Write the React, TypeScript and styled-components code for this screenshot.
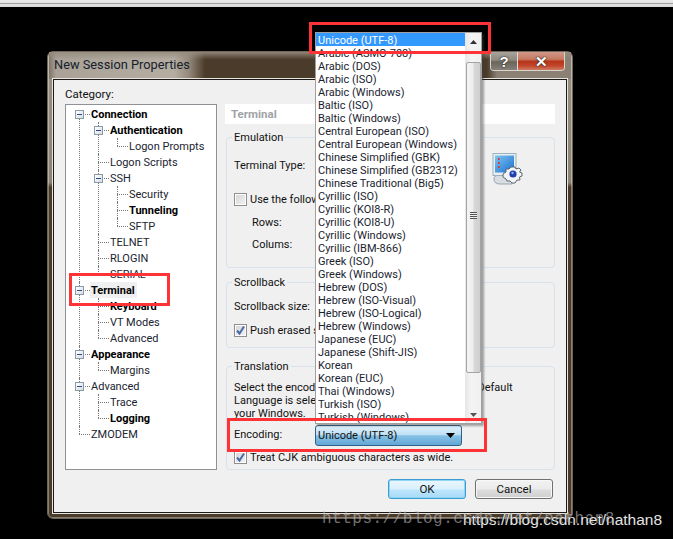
import React from "react";
import styled, { createGlobalStyle } from "styled-components";

const Global = createGlobalStyle`
  html, body { margin: 0; padding: 0; background: #000; overflow: hidden; }
  * { box-sizing: border-box; }
`;

const FONT = `Roboto, "Noto Sans", sans-serif`;

const Page = styled.div`
  position: relative;
  width: 673px;
  height: 539px;
  background: #000;
  overflow: hidden;
  font: 11px/16px ${FONT};
  color: #111;
`;

const TopStrip = styled.div`
  height: 7px;
  background: linear-gradient(180deg, #e8e8e8 0, #e8e8e8 35%, #9c9c9c 45%, #a8a8a8 55%, #e4e4e4 65%, #d8d8d8 100%);
`;

const Win = styled.div`
  width: 526px;
  height: 468px;
  margin: 44px 0 0 47px;
  padding: 0 5px 5px 5px;
  border-radius: 6px;
  border: 1px solid #6f6558;
  background: linear-gradient(180deg, #9b9286 0, #8c8377 28%, #4a3a2a 29%, #4a3a2a 100%);
  display: flex;
  flex-direction: column;
  box-shadow: inset 0 0 0 1px rgba(255, 255, 255, 0.35);
`;

const TitleBar = styled.div`
  height: 27px;
  margin: 0 -4px 0 -4px;
  padding-left: 5px;
  flex: none;
  display: flex;
  align-items: flex-start;
  justify-content: space-between;
  background:
    linear-gradient(180deg, rgba(150, 140, 128, 0.9) 0, rgba(150, 140, 128, 0) 28%),
    linear-gradient(90deg, #7d7467 0, #aaa297 7px, #b5ada2 125px, #94897b 140px, #4b3b2a 156px, #4b3b2a 438px, #8a8073 448px, #8a8073 100%);
`;

const TitleText = styled.span`
  font-size: 12.8px;
  line-height: 26px;
  color: #14202c;
`;

const Caption = styled.div`
  display: flex;
  height: 19px;
  margin-right: 6px;
  border: 1px solid #d8d4cc;
  border-top: 0;
  border-radius: 0 0 4px 4px;
  overflow: hidden;
`;

const CapBtn = styled.div<{ $wide?: boolean }>`
  width: ${(p) => (p.$wide ? 46 : 27)}px;
  display: flex;
  align-items: center;
  justify-content: center;
  font: bold 15px/17px "Liberation Sans", sans-serif;
  color: #fff;
  text-shadow: 0 0 2px #222, 0 0 1px #222;
  border-right: ${(p) => (p.$wide ? 0 : "1px solid #ddd")};
  background: ${(p) =>
    p.$wide
      ? "linear-gradient(180deg,#cf9a88 0,#c77a62 40%,#b8351a 52%,#c0452a 75%,#d07a60 100%)"
      : "linear-gradient(180deg,#a8a39b 0,#8f8a80 45%,#6a645a 55%,#85807a 100%)"};
`;

const Client = styled.div`
  flex: 1;
  background: #f0f0f0;
  border: 1px solid #1c1a18;
  outline: 1px solid #e8e4dc;
  padding: 5px 11px 0 11px;
  display: flex;
  flex-direction: column;
`;

const CategoryLabel = styled.div`
  height: 19px;
  font-size: 11.5px;
  line-height: 18px;
`;

const Columns = styled.div`
  display: grid;
  grid-template-columns: 152px 330px;
  column-gap: 8px;
  height: 366px;
`;

const TreeBox = styled.div`
  background: #fff;
  border: 1px solid #8e9296;
  padding-top: 1px;
`;

const Ul = styled.ul<{ $root?: boolean }>`
  list-style: none;
  margin: 0 0 0 ${(p) => (p.$root ? 13 : 19)}px;
  padding: 0;
`;

const Li = styled.li<{ $root?: boolean }>`
  position: relative;
  &::before {
    content: "";
    position: absolute;
    left: 0;
    top: 0;
    bottom: 0;
    border-left: 1px dotted #777;
  }
  &:first-child::before {
    top: ${(p) => (p.$root ? 8 : 0)}px;
  }
  &:last-child::before {
    bottom: auto;
    height: 8px;
  }
`;

const Row = styled.div`
  position: relative;
  height: 16px;
  padding-left: 11px;
  display: flex;
  align-items: center;
  &::before {
    content: "";
    position: absolute;
    left: 0;
    top: 8px;
    width: 11px;
    border-top: 1px dotted #777;
  }
`;

const Label = styled.span<{ $bold?: boolean; $selected?: boolean }>`
  position: relative;
  padding: 0 2px 0 1px;
  height: 16px;
  line-height: 17px;
  font-size: 11px;
  font-weight: ${(p) => (p.$bold ? 700 : 400)};
  color: ${(p) => (p.$bold ? "#000" : "#1a2430")};
  background: ${(p) => (p.$selected ? "#f0f0f0" : "#fff")};
`;

const Expander = styled.span`
  position: absolute;
  left: -4px;
  top: 4px;
  width: 9px;
  height: 9px;
  border: 1px solid #8a9aa8;
  background: linear-gradient(135deg, #fff, #d8dde2);
  display: flex;
  align-items: center;
  justify-content: center;
  z-index: 1;
  &::after {
    content: "";
    width: 5px;
    height: 1px;
    background: #2a4a8a;
  }
`;

type Node = { t: string; b?: boolean; s?: boolean; open?: boolean; c?: Node[] };

const TREE: Node[] = [
  {
    t: "Connection", b: true, open: true,
    c: [
      { t: "Authentication", b: true, open: true, c: [{ t: "Logon Prompts" }] },
      { t: "Logon Scripts" },
      { t: "SSH", open: true, c: [{ t: "Security" }, { t: "Tunneling", b: true }, { t: "SFTP" }] },
      { t: "TELNET" },
      { t: "RLOGIN" },
      { t: "SERIAL" },
    ],
  },
  {
    t: "Terminal", b: true, s: true, open: true,
    c: [{ t: "Keyboard", b: true }, { t: "VT Modes" }, { t: "Advanced" }],
  },
  { t: "Appearance", b: true, open: true, c: [{ t: "Margins" }] },
  { t: "Advanced", open: true, c: [{ t: "Trace" }, { t: "Logging", b: true }] },
  { t: "ZMODEM" },
];

function TreeList({ nodes, root }: { nodes: Node[]; root?: boolean }) {
  return (
    <Ul $root={root}>
      {nodes.map((n) => (
        <Li key={n.t} $root={root}>
          <Row>
            {n.open && <Expander />}
            <Label $bold={n.b} $selected={n.s}>{n.t}</Label>
          </Row>
          {n.c && <TreeList nodes={n.c} />}
        </Li>
      ))}
    </Ul>
  );
}

const RightCol = styled.div`
  display: flex;
  flex-direction: column;
`;

const PanelHead = styled.div`
  height: 20px;
  background: #fff;
  padding-left: 6px;
  font-weight: 700;
  font-size: 11.5px;
  line-height: 20px;
  color: #9fa3a6;
  margin-bottom: 13px;
`;

const Group = styled.fieldset<{ $h: number; $mt?: number }>`
  position: relative;
  margin: ${(p) => p.$mt ?? 0}px 0 0 1px;
  width: 329px;
  height: ${(p) => p.$h}px;
  padding: 0 7px;
  border: 1px solid #d9e2ea;
  border-radius: 4px;
  min-width: 0;
`;

const Legend = styled.div`
  position: absolute;
  left: 5px;
  top: -8px;
  padding: 0 2px;
  background: #f0f0f0;
  line-height: 15px;
`;

const Line = styled.div<{ $mt?: number; $indent?: number }>`
  display: flex;
  align-items: flex-start;
  height: 16px;
  line-height: 18px;
  white-space: nowrap;
  margin-top: ${(p) => p.$mt ?? 0}px;
  padding-left: ${(p) => p.$indent ?? 0}px;
`;

const Para = styled.div`
  margin-top: 14px;
  line-height: 13px;
  white-space: nowrap;
`;

const Box = styled.span`
  width: 13px;
  height: 13px;
  margin-right: 3px;
  flex: none;
  align-self: center;
  border: 1px solid #8e8f8f;
  background: linear-gradient(135deg, #d4d4d4, #f4f4f4);
  box-shadow: inset 0 0 0 1px #fff;
  display: flex;
  align-items: center;
  justify-content: center;
`;

function Check({ on }: { on?: boolean }) {
  return (
    <Box>
      {on && (
        <svg width="11" height="11" viewBox="0 0 11 11">
          <path d="M2 5.5 L4.5 8.5 L9 1.5" fill="none" stroke="#4a6aa5" strokeWidth="2" />
        </svg>
      )}
    </Box>
  );
}

const EncLabel = styled.span`
  width: 81px;
  line-height: 16px;
`;

const Combo = styled.div`
  width: 147px;
  height: 21px;
  padding: 1px 6px 0 2px;
  flex: none;
  align-self: center;
  line-height: 16px;
  border: 1px solid #2c628b;
  border-radius: 3px;
  display: flex;
  align-items: center;
  justify-content: space-between;
  background: linear-gradient(180deg, #dff0fb 0, #bfe0f5 45%, #86c1e6 52%, #63a8d5 100%);
`;

const IconSlot = styled.div`
  margin-left: auto;
  margin-right: 21px;
  height: 16px;
`;

const Footer = styled.div`
  display: flex;
  justify-content: flex-end;
  gap: 9px;
  margin-top: 9px;
  padding-right: 2px;
`;

const Btn = styled.div<{ $primary?: boolean }>`
  width: 78px;
  height: 20px;
  border-radius: 3px;
  display: flex;
  align-items: center;
  justify-content: center;
  font-size: 11.5px;
  border: 1px solid ${(p) => (p.$primary ? "#3c9bd0" : "#707070")};
  background: ${(p) =>
    p.$primary
      ? "linear-gradient(180deg,#eaf6fd 0,#d9f0fc 50%,#bee6fd 55%,#a7d9f5 100%)"
      : "linear-gradient(180deg,#f2f2f2 0,#ebebeb 50%,#dddddd 55%,#cfcfcf 100%)"};
  box-shadow: inset 0 0 0 1px ${(p) => (p.$primary ? "#8fd6f5" : "#f8f8f8")};
`;

const Drop = styled.div`
  position: absolute;
  left: 315px;
  top: 32px;
  width: 167px;
  height: 392px;
  background: #fff;
  border: 1px solid #a0a0a0;
  box-shadow: 2px 2px 2px rgba(60, 60, 60, 0.45);
  display: flex;
`;

const DropList = styled.div`
  flex: 1;
  overflow: hidden;
`;

const DropItem = styled.div<{ $sel?: boolean }>`
  height: 13px;
  line-height: 15px;
  padding-left: 2px;
  white-space: nowrap;
  background: ${(p) => (p.$sel ? "#3399ff" : "transparent")};
  color: ${(p) => (p.$sel ? "#fff" : "#1a2430")};
`;

const Scroll = styled.div`
  width: 16px;
  flex: none;
  background: linear-gradient(90deg, #e6e6e6 0, #f4f4f4 40%, #f0f0f0 100%);
  display: flex;
  flex-direction: column;
  align-items: center;
`;

const ScrollEnd = styled.div`
  flex: none;
  height: 17px;
  width: 100%;
  display: flex;
  align-items: center;
  justify-content: center;
`;

const Thumb = styled.div`
  width: 15px;
  height: 311px;
  margin-top: 12px;
  border: 1px solid #a4a4a4;
  border-radius: 2px;
  background: linear-gradient(90deg, #f4f4f4 0, #eeeeee 45%, #d8d8d8 55%, #cfcfcf 100%);
  display: flex;
  align-items: center;
  justify-content: center;
`;

const Grip = styled.div`
  width: 7px;
  height: 7px;
  margin-top: -4px;
  background: repeating-linear-gradient(180deg, #555 0, #555 1px, #eee 1px, #eee 2px);
`;

const ScrollGap = styled.div`
  flex: 1;
`;

const RedBox = styled.div<{ $x: number; $y: number; $w: number; $h: number }>`
  position: absolute;
  left: ${(p) => p.$x}px;
  top: ${(p) => p.$y}px;
  width: ${(p) => p.$w}px;
  height: ${(p) => p.$h}px;
  border: 3px solid #ff3236;
`;

const MarkMono = styled.div`
  position: absolute;
  left: 322px;
  top: 509px;
  font: 16px/20px "Liberation Mono", monospace;
  letter-spacing: 0.5px;
  color: rgba(190, 190, 190, 0.6);
  white-space: nowrap;
`;

const MarkSans = styled.div`
  position: absolute;
  left: 463px;
  top: 510px;
  font: 15.500px/20px "Liberation Sans", sans-serif;
  color: #e4e4e4;
  white-space: nowrap;
  text-shadow: 0 0 1px #000;
`;

const ITEMS = [
  "Unicode (UTF-8)", "Arabic (ASMO-708)", "Arabic (DOS)", "Arabic (ISO)", "Arabic (Windows)",
  "Baltic (ISO)", "Baltic (Windows)", "Central European (ISO)", "Central European (Windows)",
  "Chinese Simplified (GBK)", "Chinese Simplified (GB2312)", "Chinese Traditional (Big5)",
  "Cyrillic (ISO)", "Cyrillic (KOI8-R)", "Cyrillic (KOI8-U)", "Cyrillic (Windows)", "Cyrillic (IBM-866)",
  "Greek (ISO)", "Greek (Windows)", "Hebrew (DOS)", "Hebrew (ISO-Visual)", "Hebrew (ISO-Logical)",
  "Hebrew (Windows)", "Japanese (EUC)", "Japanese (Shift-JIS)", "Korean", "Korean (EUC)",
  "Thai (Windows)", "Turkish (ISO)", "Turkish (Windows)",
];

function SessionIcon() {
  return (
    <svg width="34" height="34" viewBox="0 0 34 34" style={{ marginTop: -4, display: "block" }}>
      <defs>
        <linearGradient id="scr" x1="0" y1="0" x2="1" y2="1">
          <stop offset="0" stopColor="#7cc4f0" />
          <stop offset="1" stopColor="#1e6fd0" />
        </linearGradient>
      </defs>
      <path d="M2 26 Q2 22 8 22 L20 22 L20 31 L8 31 Q2 31 2 26Z" fill="#d8dde2" stroke="#9aa5ae" />
      <rect x="1" y="0.500" width="23" height="22" fill="#e8eef2" stroke="#9eb0be" />
      <rect x="3" y="2.500" width="19" height="17" fill="url(#scr)" />
      <rect x="6" y="5" width="1.600" height="2" fill="#e03030" />
      <rect x="6" y="9" width="1.600" height="2" fill="#e03030" />
      <rect x="6" y="13" width="1.600" height="2" fill="#e03030" />
      <g transform="translate(-3 -3)">
        <path
          d="M22 17 L26 17 L27 19 L30 18 L32 20 L30.500 22 L33 23 L33 26 L30.500 27 L31 30 L28 30 L26 33 L23 33 L21 31 L18 31 L17 29 L14 27 L14 24 L17 22 L17 19 L20 19Z"
          fill="#f2f4f6"
          stroke="#5a6670"
          strokeWidth="1"
        />
        <circle cx="24" cy="24" r="3.600" fill="#1f3fae" />
        <circle cx="23.500" cy="23" r="1.200" fill="#8fb0ee" />
      </g>
    </svg>
  );
}

export default function App() {
  return (
    <>
      <Global />
      <Page>
        <TopStrip />
        <Win>
          <TitleBar>
            <TitleText>New Session Properties</TitleText>
            <Caption>
              <CapBtn>?</CapBtn>
              <CapBtn $wide>✕</CapBtn>
            </Caption>
          </TitleBar>
          <Client>
            <CategoryLabel>Category:</CategoryLabel>
            <Columns>
              <TreeBox>
                <TreeList nodes={TREE} root />
              </TreeBox>
              <RightCol>
                <PanelHead>Terminal</PanelHead>
                <Group $h={131}>
                  <Legend>Emulation</Legend>
                  <Line $mt={19}>
                    Terminal Type:
                    <IconSlot><SessionIcon /></IconSlot>
                  </Line>
                  <Line $mt={18}>
                    <Check />
                    Use the following
                  </Line>
                  <Line $mt={7} $indent={18}>Rows:</Line>
                  <Line $mt={6} $indent={18}>Colums:</Line>
                </Group>
                <Group $h={66} $mt={14}>
                  <Legend>Scrollback</Legend>
                  <Line $mt={15}>Scrollback size:</Line>
                  <Line $mt={8}>
                    <Check on />
                    Push erased screens
                  </Line>
                </Group>
                <Group $h={104} $mt={18}>
                  <Legend>Translation</Legend>
                  <Para>
                    Select the encoding used by the remote host. The Default
                    <br />
                    Language is selected according to the language of
                    <br />
                    your Windows.
                  </Para>
                  <Line $mt={7}>
                    <EncLabel>Encoding:</EncLabel>
                    <Combo>
                      Unicode (UTF-8)
                      <svg width="9" height="5" viewBox="0 0 9 5"><path d="M0 0H9L4.500 5Z" fill="#000" /></svg>
                    </Combo>
                  </Line>
                  <Line $mt={6}>
                    <Check on />
                    Treat CJK ambiguous characters as wide.
                  </Line>
                </Group>
              </RightCol>
            </Columns>
            <Footer>
              <Btn $primary>OK</Btn>
              <Btn>Cancel</Btn>
            </Footer>
          </Client>
        </Win>

        <Drop>
          <DropList>
            {ITEMS.map((t, i) => (
              <DropItem key={t} $sel={i === 0}>{t}</DropItem>
            ))}
          </DropList>
          <Scroll>
            <ScrollEnd>
              <svg width="7" height="4" viewBox="0 0 7 4"><path d="M0 4H7L3.500 0Z" fill="#333" /></svg>
            </ScrollEnd>
            <Thumb><Grip /></Thumb>
            <ScrollGap />
            <ScrollEnd>
              <svg width="7" height="4" viewBox="0 0 7 4"><path d="M0 0H7L3.500 4Z" fill="#555" /></svg>
            </ScrollEnd>
          </Scroll>
        </Drop>

        <RedBox $x={309} $y={22} $w={182} $h={32} />
        <RedBox $x={69} $y={273} $w={101} $h={33} />
        <RedBox $x={227} $y={418} $w={260} $h={34} />

        <MarkMono>https://blog.csdn.net/nathan8</MarkMono>
        <MarkSans>https://blog.csdn.net/nathan8</MarkSans>
      </Page>
    </>
  );
}
